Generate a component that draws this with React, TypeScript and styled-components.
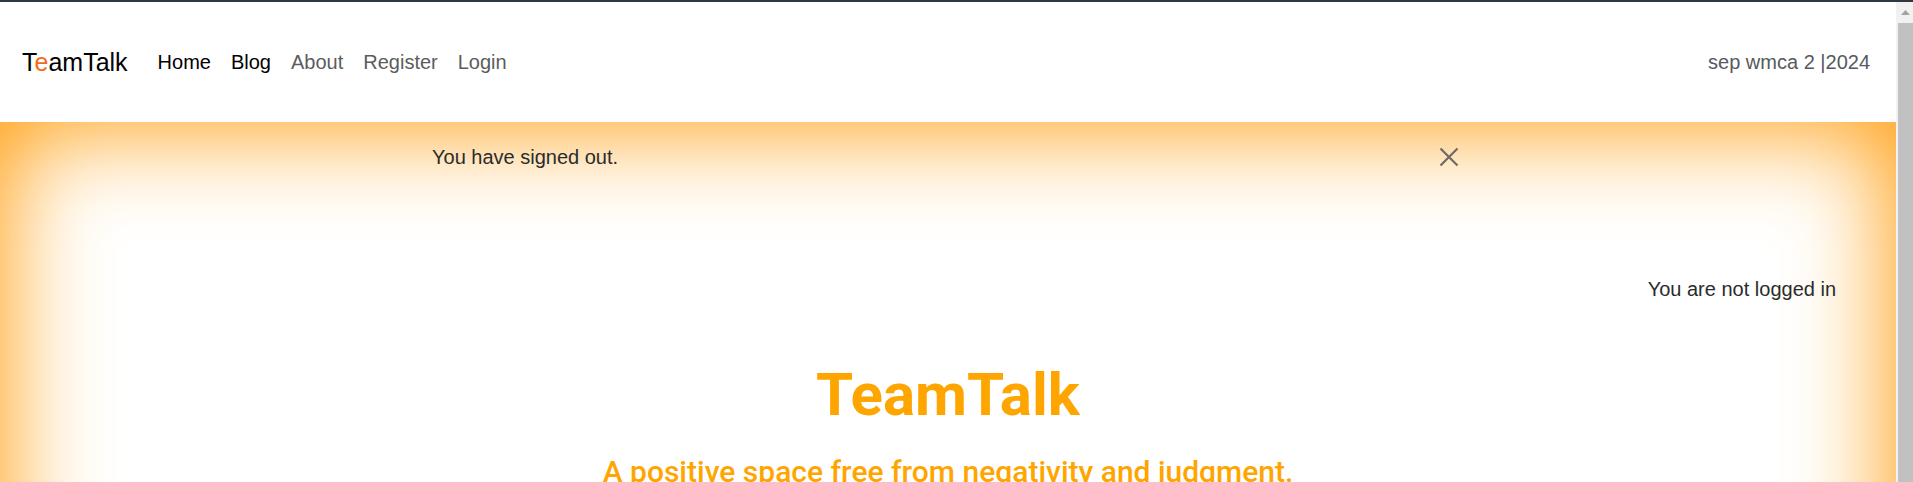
import React from "react";
import styled, { createGlobalStyle } from "styled-components";

const GlobalStyle = createGlobalStyle`
  html, body {
    margin: 0;
    padding: 0;
    overflow: hidden;
    background: #ffffff;
  }
  * { box-sizing: border-box; }
`;

const Frame = styled.div`
  display: flex;
  flex-direction: column;
  width: 100vw;
  height: 100vh;
  overflow: hidden;
  font-family: "Liberation Sans", Arial, sans-serif;
`;

const WindowEdge = styled.div`
  height: 2px;
  flex: 0 0 2px;
  background: #2f3644;
`;

const Viewport = styled.div`
  flex: 1;
  display: flex;
  min-height: 0;
`;

const Page = styled.div`
  flex: 1;
  display: flex;
  flex-direction: column;
  min-width: 0;
  overflow: hidden;
`;

const Header = styled.header`
  height: 120px;
  flex: 0 0 120px;
  display: flex;
  align-items: center;
  padding: 0 26px 0 22px;
  background: #ffffff;
`;

const Brand = styled.a`
  font-size: 25px;
  color: #000;
  text-decoration: none;
  margin-right: 20px;
`;

const BrandAccent = styled.span`
  color: #f26a1b;
`;

const NavList = styled.nav`
  display: flex;
  align-items: center;
`;

const NavLink = styled.a<{ $strong?: boolean }>`
  font-size: 20px;
  padding: 0 10px;
  text-decoration: none;
  color: ${(p) => (p.$strong ? "#000000" : "#5c5c5c")};
`;

const Spacer = styled.div`
  flex: 1;
`;

const Session = styled.span`
  font-size: 20px;
  color: #555a60;
`;

const Main = styled.main`
  flex: 0 0 auto;
  min-height: 760px;
  display: flex;
  flex-direction: column;
  box-shadow: inset 0 0 100px 6px #ff9c0a;
  background: #ffffff;
`;

const Alert = styled.div`
  width: 1064px;
  margin: 0 auto;
  padding: 20px 21px 20px 16px;
  display: flex;
  align-items: center;
  justify-content: space-between;
`;

const AlertText = styled.span`
  font-size: 20px;
  line-height: 30px;
  color: #2b2b2b;
`;

const CloseButton = styled.button`
  width: 20px;
  height: 20px;
  padding: 0;
  border: none;
  background: transparent;
  display: flex;
  align-items: center;
  justify-content: center;
  cursor: pointer;
`;

const Status = styled.div`
  margin-top: 82px;
  padding-right: 60px;
  text-align: right;
  font-size: 20px;
  line-height: 30px;
  color: #2b2b2b;
`;

const Title = styled.h1`
  margin: 55px 0 0;
  text-align: center;
  font-family: Roboto, "Noto Sans", sans-serif;
  font-weight: 700;
  font-size: 60px;
  line-height: 72px;
  color: #ffa500;
`;

const Tagline = styled.h3`
  margin: 23px 0 0;
  text-align: center;
  font-family: Roboto, "Noto Sans", sans-serif;
  font-weight: 500;
  font-size: 30px;
  line-height: 36px;
  color: #ffa500;
`;

const Scrollbar = styled.div`
  width: 17px;
  flex: 0 0 17px;
  display: flex;
  flex-direction: column;
  background: #f1f1f1;
`;

const ScrollArrow = styled.div`
  height: 21px;
  flex: 0 0 21px;
  display: flex;
  align-items: center;
  justify-content: center;
  padding-left: 2px;
`;

const ScrollThumb = styled.div`
  flex: 1;
  margin-left: 2px;
  background: #c1c1c1;
`;

export default function App() {
  return (
    <>
      <GlobalStyle />
      <Frame>
        <WindowEdge />
        <Viewport>
          <Page>
            <Header>
              <Brand href="#">
                T<BrandAccent>e</BrandAccent>amTalk
              </Brand>
              <NavList>
                <NavLink href="#" $strong>Home</NavLink>
                <NavLink href="#" $strong>Blog</NavLink>
                <NavLink href="#">About</NavLink>
                <NavLink href="#">Register</NavLink>
                <NavLink href="#">Login</NavLink>
              </NavList>
              <Spacer />
              <Session>sep wmca 2 |2024</Session>
            </Header>
            <Main>
              <Alert role="alert">
                <AlertText>You have signed out.</AlertText>
                <CloseButton aria-label="Close">
                  <svg width="20" height="20" viewBox="0 0 20 20">
                    <path
                      d="M1.5 1.5 L18.5 18.5 M18.5 1.5 L1.5 18.5"
                      stroke="#6e6a64"
                      strokeWidth="2.2"
                      fill="none"
                    />
                  </svg>
                </CloseButton>
              </Alert>
              <Status>You are not logged in</Status>
              <Title>TeamTalk</Title>
              <Tagline>A positive space free from negativity and judgment.</Tagline>
            </Main>
          </Page>
          <Scrollbar>
            <ScrollArrow>
              <svg width="9" height="5" viewBox="0 0 9 5">
                <path d="M0 5 L4.5 0 L9 5 Z" fill="#a3a3a3" />
              </svg>
            </ScrollArrow>
            <ScrollThumb />
          </Scrollbar>
        </Viewport>
      </Frame>
    </>
  );
}
